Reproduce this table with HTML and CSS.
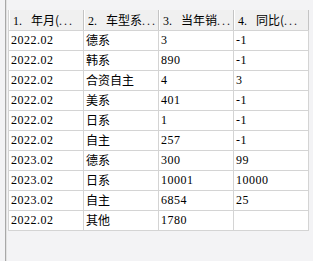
FILE: index.html
```html
<!DOCTYPE html>
<html>
<head>
<meta charset="utf-8">
<link rel="stylesheet" href="styles.css">
</head>
<body>
<div class="frame">
  <div class="panel">
    <table class="grid">
      <thead>
        <tr>
          <th><span class="num">1.</span><span class="zh">年月(</span><span class="dots">...</span></th>
          <th><span class="num">2.</span><span class="zh">车型系</span><span class="dots">...</span></th>
          <th><span class="num">3.</span><span class="zh">当年销</span><span class="dots">...</span></th>
          <th><span class="num">4.</span><span class="zh">同比(</span><span class="dots">...</span></th>
        </tr>
      </thead>
      <tbody>
        <tr><td>2022.02</td><td class="zh">德系</td><td>3</td><td>-1</td></tr>
        <tr><td>2022.02</td><td class="zh">韩系</td><td>890</td><td>-1</td></tr>
        <tr><td>2022.02</td><td class="zh">合资自主</td><td>4</td><td>3</td></tr>
        <tr><td>2022.02</td><td class="zh">美系</td><td>401</td><td>-1</td></tr>
        <tr><td>2022.02</td><td class="zh">日系</td><td>1</td><td>-1</td></tr>
        <tr><td>2022.02</td><td class="zh">自主</td><td>257</td><td>-1</td></tr>
        <tr><td>2023.02</td><td class="zh">德系</td><td>300</td><td>99</td></tr>
        <tr><td>2023.02</td><td class="zh">日系</td><td>10001</td><td>10000</td></tr>
        <tr><td>2023.02</td><td class="zh">自主</td><td>6854</td><td>25</td></tr>
        <tr><td>2022.02</td><td class="zh">其他</td><td>1780</td><td></td></tr>
      </tbody>
    </table>
  </div>
</div>
</body>
</html>
```

FILE: styles.css
```css
html, body {
  margin: 0;
  padding: 0;
  background: #f3f3f5;
  width: 313px;
  height: 261px;
  overflow: hidden;
}
.frame {
  padding-left: 5px;
  height: 261px;
  box-sizing: border-box;
}
.panel {
  height: 261px;
  border-left: 1px solid #a8a8a8;
  box-shadow: inset 1px 0 0 #e2e2e2;
  padding: 10px 0 0 2px;
  box-sizing: border-box;
}
.grid {
  border-collapse: collapse;
  table-layout: fixed;
  width: 301px;
  font-family: "Liberation Serif", "Noto Sans CJK SC", serif;
  font-size: 12px;
  letter-spacing: 0.5px;
  color: #000;
}
.grid th {
  width: 74px;
  height: 20px;
  padding: 0 0 0 4px;
  box-sizing: border-box;
  background: #f0f0f0;
  text-align: left;
  font-weight: normal;
  white-space: nowrap;
  overflow: hidden;
  border-right: 1px solid #c4c4c4;
  box-shadow: inset 1px 0 0 #ffffff;
  border-bottom: 1px solid #d4d4d4;
  letter-spacing: 0;
}
.grid th:first-child {
  border-left: 1px solid #d4d4d4;
}
.num {
  display: inline-block;
  width: 18px;
}
.dots {
  letter-spacing: 2px;
  color: #222;
}
.zh {
  font-family: "Noto Sans CJK SC", sans-serif;
  letter-spacing: 0;
}
.grid td {
  height: 20px;
  padding: 0 0 0 2px;
  box-sizing: border-box;
  background: #ffffff;
  border: 1px solid #d4d4d4;
  white-space: nowrap;
  overflow: hidden;
  line-height: 18px;
}
```
